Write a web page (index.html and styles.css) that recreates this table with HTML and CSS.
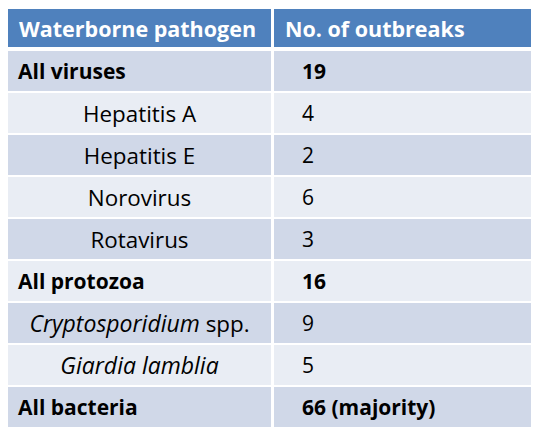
FILE: index.html
```html
<!DOCTYPE html>
<html lang="en">
<head>
    <meta charset="UTF-8">
    <meta name="viewport" content="width=device-width, initial-scale=1.0">
    <title>Waterborne Outbreaks</title>
    <link rel="stylesheet" href="styles.css">
</head>
<body>
    <table class="outbreaks">
        <thead>
            <tr>
                <th>Waterborne pathogen</th>
                <th>No. of outbreaks</th>
            </tr>
        </thead>
        <tbody>
            <tr class="dark group">
                <td>All viruses</td>
                <td class="count">19</td>
            </tr>
            <tr class="light">
                <td class="sub">Hepatitis A</td>
                <td class="count">4</td>
            </tr>
            <tr class="dark">
                <td class="sub">Hepatitis E</td>
                <td class="count">2</td>
            </tr>
            <tr class="light">
                <td class="sub">Norovirus</td>
                <td class="count">6</td>
            </tr>
            <tr class="dark">
                <td class="sub">Rotavirus</td>
                <td class="count">3</td>
            </tr>
            <tr class="light group">
                <td>All protozoa</td>
                <td class="count">16</td>
            </tr>
            <tr class="dark">
                <td class="sub"><em>Cryptosporidium</em> spp.</td>
                <td class="count">9</td>
            </tr>
            <tr class="light">
                <td class="sub"><em>Giardia lamblia</em></td>
                <td class="count">5</td>
            </tr>
            <tr class="dark group">
                <td>All bacteria</td>
                <td class="count">66 (majority)</td>
            </tr>
        </tbody>
    </table>
</body>
</html>
```

FILE: styles.css
```css
body {
    font-family: 'Open Sans', 'DejaVu Sans', sans-serif;
    margin: 0;
    padding: 0;
    background-color: #fff;
    color: #000;
}
.outbreaks {
    border-collapse: separate;
    border-spacing: 0;
    width: 523px;
    margin: 9px 0 0 8px;
    font-size: 21px;
}
.outbreaks th {
    height: 38px;
    padding: 0 11px;
    background-color: #4f81bd;
    color: #fff;
    text-align: left;
    font-weight: bold;
    font-size: 21.5px;
    border-bottom: 4px solid #fff;
}
.outbreaks td {
    height: 40px;
    padding: 0 10px;
    border-bottom: 2px solid #fff;
}
.outbreaks th:first-child, .outbreaks td:first-child {
    width: 241px;
    border-right: 3px solid #fff;
}
.outbreaks tr:last-child td {
    border-bottom: none;
}
.outbreaks .dark td {
    background-color: #d0d8e8;
}
.outbreaks .light td {
    background-color: #e9edf4;
}
.outbreaks .group td {
    font-weight: bold;
}
.outbreaks td.sub {
    text-align: center;
    font-size: 22.4px;
}
.outbreaks td.sub em {
    font-size: 23px;
}
.outbreaks td.count {
    padding-left: 28px;
}
```
